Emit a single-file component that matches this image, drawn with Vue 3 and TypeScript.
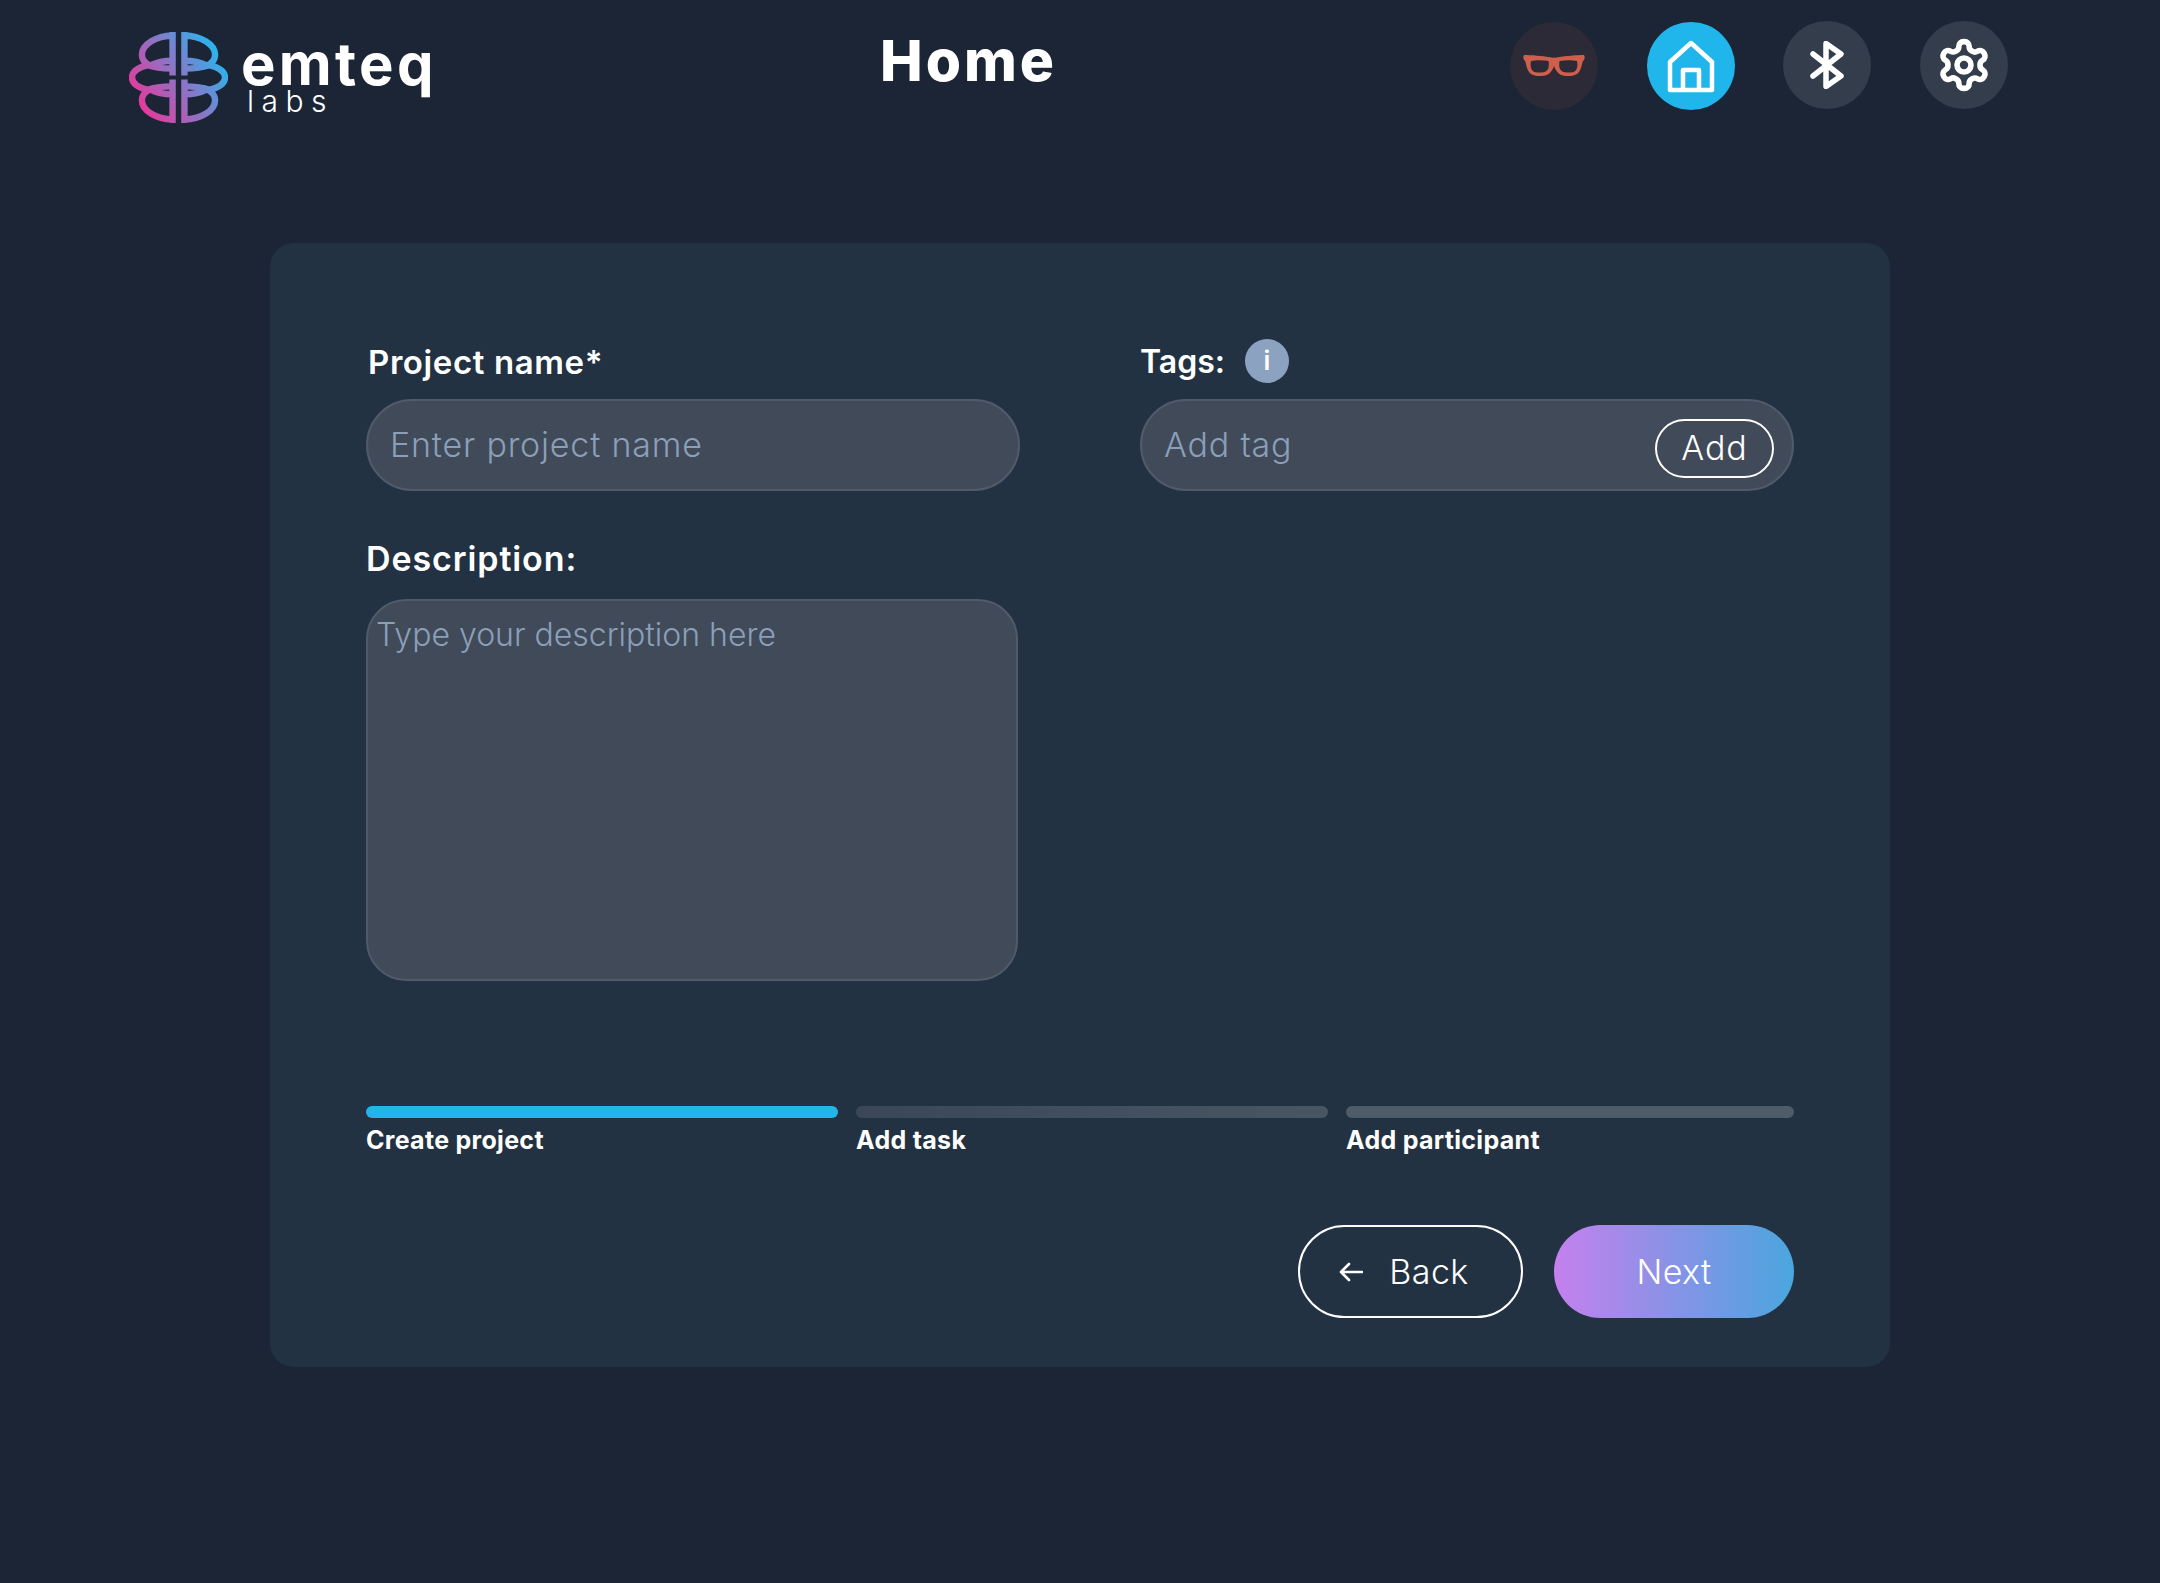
<template>
  <div class="page">
    <header class="topbar">
      <div class="logo">
        <svg class="logo__mark" viewBox="0 0 100 92" fill="none" stroke="url(#brain)" stroke-width="6.500" stroke-linejoin="round">
          <defs>
            <linearGradient id="brain" gradientUnits="userSpaceOnUse" x1="8" y1="72" x2="94" y2="18">
              <stop offset="0" stop-color="#e6399b" />
              <stop offset="0.5" stop-color="#8a76c8" />
              <stop offset="1" stop-color="#22baf0" />
            </linearGradient>
          </defs>
          <path d="M44 0V44M44 3.500C28 4 13 12 13 23C13 28 17 32 21 34C27 31 35 29 44 29" />
          <path d="M44 37C33 37 25 36 19 33.500C9 36 3 40 3 46C3 52 9 56 19 58.500C25 56 33 55 44 55" />
          <path d="M44 92V48M44 88.500C28 88 13 80 13 69C13 64 17 60 21 58C27 61 35 63 44 63" />
          <path d="M56 0V44M56 3.500C72 4 87 12 87 23C87 28 83 32 79 34C73 31 65 29 56 29" />
          <path d="M56 37C67 37 75 36 81 33.500C91 36 97 40 97 46C97 52 91 56 81 58.500C75 56 67 55 56 55" />
          <path d="M56 92V48M56 88.500C72 88 87 80 87 69C87 64 83 60 79 58C73 61 65 63 56 63" />
        </svg>
        <div class="logo__text">
          <span class="logo__name">emteq</span>
          <span class="logo__sub">labs</span>
        </div>
      </div>
      <h1 class="title">Home</h1>
      <nav class="actions-top">
        <button class="icon-btn icon-btn--glasses" type="button" aria-label="Glasses">
          <svg width="62" height="22" viewBox="0 0 62 22" fill="#cd5f4c" fill-rule="evenodd">
            <path d="M1 0C8 0 20 1 26 2C29 3 33 3 36 2C42 1 54 0 61 0C62 2 62 4 60 6C59 8 59 10 58 13C56 19 52 21 46 21H43C37 21 33 17 31 11C29 17 25 21 19 21H16C10 21 6 19 4 13C3 10 3 8 2 6C0 4 0 2 1 0Z
                     M8 6C13 5 20 5 25.500 6C26 10 26 12 25 14C24 16.500 21 17.500 18 17.500H15C11 17.500 9 16 8 13C7.500 11 7.500 8 8 6Z
                     M54 6C49 5 42 5 36.500 6C36 10 36 12 37 14C38 16.500 41 17.500 44 17.500H47C51 17.500 53 16 54 13C54.500 11 54.500 8 54 6Z" />
          </svg>
        </button>
        <button class="icon-btn icon-btn--active" type="button" aria-label="Home">
          <svg width="48" height="53" viewBox="0 0 48 53" fill="none" stroke="#fff" stroke-width="4.500" stroke-linejoin="round" stroke-linecap="round">
            <path d="M3 22L24 3L45 22V50H3Z" />
            <path d="M16 50V30H32V50" />
          </svg>
        </button>
        <button class="icon-btn icon-btn--up" type="button" aria-label="Bluetooth">
          <svg width="34" height="48" viewBox="0 0 34 48" fill="none" stroke="#fff" stroke-width="5.500" stroke-linejoin="round" stroke-linecap="round">
            <path d="M3 13L31 35L16 45.500V2.500L31 13L3 35" />
          </svg>
        </button>
        <button class="icon-btn icon-btn--up" type="button" aria-label="Settings">
          <svg width="56" height="56" viewBox="0 0 24 24" fill="none" stroke="#fff" stroke-width="2.400" stroke-linejoin="round" stroke-linecap="round">
            <path d="M12.220 2h-.44a2 2 0 0 0-2 2v.18a2 2 0 0 1-1 1.730l-.43.25a2 2 0 0 1-2 0l-.15-.08a2 2 0 0 0-2.730.73l-.22.38a2 2 0 0 0 .73 2.730l.15.1a2 2 0 0 1 1 1.720v.51a2 2 0 0 1-1 1.740l-.15.09a2 2 0 0 0-.73 2.730l.22.38a2 2 0 0 0 2.730.73l.15-.08a2 2 0 0 1 2 0l.43.25a2 2 0 0 1 1 1.730V20a2 2 0 0 0 2 2h.44a2 2 0 0 0 2-2v-.18a2 2 0 0 1 1-1.730l.43-.25a2 2 0 0 1 2 0l.15.08a2 2 0 0 0 2.730-.73l.22-.39a2 2 0 0 0-.73-2.730l-.15-.08a2 2 0 0 1-1-1.740v-.5a2 2 0 0 1 1-1.740l.15-.09a2 2 0 0 0 .73-2.730l-.22-.38a2 2 0 0 0-2.730-.73l-.15.08a2 2 0 0 1-2 0l-.43-.25a2 2 0 0 1-1-1.730V4a2 2 0 0 0-2-2z" />
            <circle cx="12" cy="12" r="3" />
          </svg>
        </button>
      </nav>
    </header>

    <main class="card">
      <div class="form">
        <div class="field">
          <label class="label label--project" for="project">Project name*</label>
          <input id="project" class="input" type="text" placeholder="Enter project name" />
        </div>
        <div class="field">
          <div class="label label--tags">
            <label for="tag">Tags:</label>
            <span class="info">i</span>
          </div>
          <div class="tag-input">
            <input id="tag" class="input" type="text" placeholder="Add tag" />
            <button class="add-btn" type="button">Add</button>
          </div>
        </div>
        <div class="field field--desc">
          <label class="label label--desc" for="desc">Description:</label>
          <textarea id="desc" class="textarea" placeholder="Type your description here"></textarea>
        </div>
      </div>

      <div class="steps">
        <div v-for="step in steps" :key="step.name" class="step">
          <div :class="['step__bar', { 'step__bar--done': step.active }]"></div>
          <span class="step__name">{{ step.name }}</span>
        </div>
      </div>

      <div class="footer">
        <button class="btn btn--back" type="button">
          <svg width="24" height="20" viewBox="0 0 24 20" fill="none" stroke="#fff" stroke-width="2.600" stroke-linecap="round" stroke-linejoin="round">
            <path d="M23 10H2M10 2L2 10L10 18" />
          </svg>
          Back
        </button>
        <button class="btn btn--next" type="button">Next</button>
      </div>
    </main>
  </div>
</template>

<script setup lang="ts">
const steps = [
  { name: 'Create project', active: true },
  { name: 'Add task', active: false },
  { name: 'Add participant', active: false }
]
</script>

<style>
html,
body {
  margin: 0;
  background: #1b2536;
}
</style>

<style scoped>
.page {
  width: 2160px;
  height: 1583px;
  background: #1b2536;
  color: #fff;
  font-family: Inter, 'Open Sans', sans-serif;
  overflow: hidden;
}

.topbar {
  display: flex;
  align-items: flex-start;
  height: 243px;
  box-sizing: border-box;
  padding: 22px 152px 0 129px;
}

.logo {
  display: flex;
  align-items: flex-start;
  gap: 13px;
  width: 304px;
  padding-top: 10px;
}

.logo__mark {
  width: 99px;
  height: 91px;
  flex: none;
}

.logo__text {
  display: flex;
  flex-direction: column;
}

.logo__name {
  font-size: 58px;
  font-weight: 700;
  line-height: 52px;
  letter-spacing: 3.300px;
  margin-top: 6px;
}

.logo__sub {
  font-size: 30px;
  font-weight: 300;
  line-height: 22px;
  letter-spacing: 7.500px;
  margin-left: 6px;
}

.title {
  margin: 8px 0 0 447px;
  font-size: 57px;
  font-weight: 800;
  line-height: 62px;
  letter-spacing: 3px;
}

.actions-top {
  display: flex;
  gap: 48.670px;
  margin-left: auto;
}

.icon-btn {
  display: flex;
  align-items: center;
  justify-content: center;
  width: 88px;
  height: 88px;
  padding: 0;
  border: none;
  border-radius: 50%;
  background: #333d4c;
}

.icon-btn--up {
  margin-top: -1px;
}

.icon-btn--glasses {
  background: #2c2a36;
}

.icon-btn--active {
  background: #20b6ec;
}

.card {
  box-sizing: border-box;
  width: 1620px;
  height: 1124px;
  margin-left: 270px;
  padding: 96px 96px 0;
  background: #233242;
  border-radius: 24px;
}

.form {
  display: grid;
  grid-template-columns: 654px 654px;
  column-gap: 120px;
  row-gap: 47px;
  height: 767px;
  align-content: start;
}

.field {
  display: flex;
  flex-direction: column;
}

.field--desc {
  grid-column: 1;
}

.label {
  height: 60px;
  font-size: 33px;
  font-weight: 600;
  line-height: 46px;
  letter-spacing: 0.600px;
}

.label--project {
  margin-left: 2px;
}

.label--desc {
  height: 64px;
  font-size: 34px;
  letter-spacing: 0.900px;
  margin-top: -2px;
}

.label--tags {
  display: flex;
  gap: 20px;
  font-size: 32px;
  letter-spacing: 0;
}

.info {
  display: flex;
  align-items: center;
  justify-content: center;
  width: 44px;
  height: 44px;
  border-radius: 50%;
  background: #8ba2c0;
  font-size: 26px;
  font-weight: 600;
}

.input,
.textarea {
  box-sizing: border-box;
  width: 100%;
  border: 2px solid #505a6b;
  background: #414a58;
  color: #fff;
  font-family: inherit;
  outline: none;
}

.input {
  height: 92px;
  padding: 0 22px 2px;
  border-radius: 46px;
  font-size: 34px;
  font-weight: 300;
  letter-spacing: 0.800px;
}

.textarea {
  display: block;
  width: 652px;
  height: 382px;
  margin-top: -1px;
  padding: 14px 8px;
  border-radius: 40px;
  font-size: 32px;
  font-weight: 300;
  line-height: 40px;
  letter-spacing: 0;
  resize: none;
}

.input::placeholder,
.textarea::placeholder {
  color: #8a9fba;
  opacity: 1;
}

.tag-input {
  position: relative;
}

.add-btn {
  position: absolute;
  top: 20px;
  right: 20px;
  width: 119px;
  height: 59px;
  padding: 0 0 2px;
  border: 2px solid #fff;
  border-radius: 30px;
  background: transparent;
  color: #fff;
  font-family: inherit;
  font-size: 34px;
  font-weight: 300;
  letter-spacing: 1px;
}

.steps {
  display: grid;
  grid-template-columns: 472px 472px 448px;
  column-gap: 18px;
}

.step {
  display: flex;
  flex-direction: column;
  gap: 4px;
}

.step__bar {
  height: 12px;
  border-radius: 6px;
  background: #3b4757;
}

.step:nth-child(2) .step__bar {
  background: linear-gradient(90deg, #3b4757 0%, #4a5564 100%);
}

.step:nth-child(3) .step__bar {
  background: #505b69;
}

.step .step__bar--done {
  background: #22b5ea;
}

.step__name {
  font-size: 25px;
  font-weight: 700;
  line-height: 36px;
  letter-spacing: 0.300px;
}

.footer {
  display: flex;
  justify-content: flex-end;
  gap: 31px;
  margin-top: 67px;
}

.btn {
  display: flex;
  align-items: center;
  justify-content: center;
  box-sizing: border-box;
  height: 93px;
  border-radius: 47px;
  color: #fff;
  font-family: inherit;
  font-size: 34px;
  font-weight: 300;
  letter-spacing: 0.400px;
}

.btn--back {
  gap: 26px;
  width: 225px;
  padding-right: 19px;
  border: 2px solid #fff;
  background: transparent;
}

.btn--next {
  width: 240px;
  border: none;
  background: linear-gradient(90deg, #c580ee 0%, #4aa6de 100%);
}
</style>
